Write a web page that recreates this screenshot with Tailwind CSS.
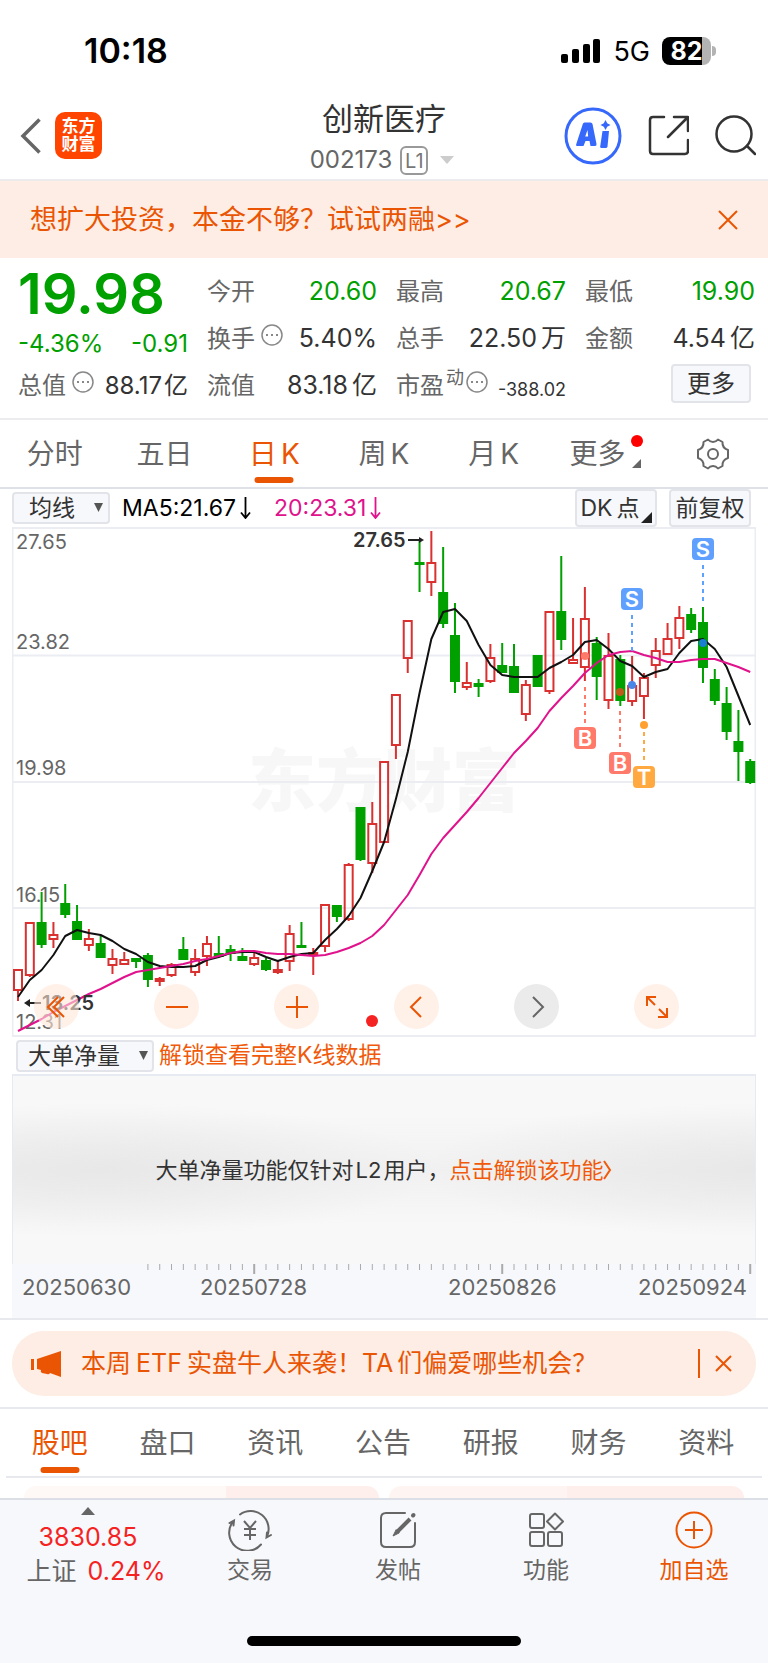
<!DOCTYPE html>
<html lang="zh-CN">
<head>
  <meta charset="UTF-8" />
  <meta name="viewport" content="width=device-width, initial-scale=1.0" />
  <title>创新医疗 002173</title>
  <script src="https://cdn.jsdelivr.net/npm/@tailwindcss/browser@4"></script>
</head>
<body class="min-h-screen flex flex-col bg-white font-['Inter','Noto_Sans_CJK_SC',sans-serif] text-[#333] text-[24px] leading-none">

  <!-- status bar -->
  <div class="h-[95px] pt-[7px] pl-[84px] pr-[52px] flex items-center justify-between text-black">
    <span class="text-[34px] font-semibold">10:18</span>
    <div class="flex items-center gap-3">
      <svg class="w-[40px] h-[24px]" viewBox="0 0 40 24">
        <rect x="0" y="15" width="7" height="9" rx="2" />
        <rect x="11" y="10" width="7" height="14" rx="2" />
        <rect x="22" y="5" width="7" height="19" rx="2" />
        <rect x="32" y="0" width="7" height="24" rx="2" />
      </svg>
      <span class="text-[27px]">5G</span>
      <div class="flex items-center gap-px">
        <div class="w-[49px] h-[28px] rounded-lg bg-linear-to-r from-black from-82% to-[#b3b3b3] to-82% text-white text-[25px] font-bold text-center leading-[28px]">82</div>
        <div class="w-1 h-[10px] rounded-r-full bg-[#b3b3b3]"></div>
      </div>
    </div>
  </div>

  <!-- header -->
  <header class="h-[86px] px-3 grid grid-cols-[1fr_auto_1fr] items-center border-b-2 border-[#ececee]">
    <div class="flex items-center gap-[14px] pl-2 pb-[3px]">
      <button aria-label="返回">
        <svg class="w-[21px] h-[36px]" viewBox="0 0 21 36" fill="none" stroke="#666" stroke-width="3.5"><path d="M19.500 1.500L3 18l16.500 16.500" /></svg>
      </button>
      <a href="#" class="size-[47px] rounded-[10px] bg-[#ff4400] text-white text-[17px] leading-[18px] font-bold text-center pt-[5px]">东方<br />财富</a>
    </div>
    <div class="flex flex-col items-center gap-2">
      <h1 class="text-[31px] leading-[38px]">创新医疗</h1>
      <div class="flex items-center gap-2 pr-1 text-[24px] text-[#666]">
        <span>002173</span>
        <span class="w-[28px] h-[29px] border-2 border-[#999] rounded-md text-[20px] leading-[26px] text-center text-[#777]">L1</span>
        <svg class="w-[14px] h-[8px] ml-1" viewBox="0 0 14 8"><path d="M0 0h14L7 8z" fill="#ccc" /></svg>
      </div>
    </div>
    <div class="flex items-center justify-end gap-[26px] pb-[3px]">
      <button aria-label="AI">
        <svg class="size-[58px]" viewBox="0 0 58 58" fill="#3568fb">
          <circle cx="29" cy="29" r="27" fill="none" stroke="#3568fb" stroke-width="3" />
          <path d="M20.500 15.500h6q1.500 0 2 1.500l4 20q.300 2-1.500 2h-4.500l-1-5h-4l-2 5h-6q-2 0-1.200-2l6.500-20q.400-1.500 1.700-1.500zM23.500 23l-2.300 6.500h3z" />
          <path d="M38.500 24h6.500l-1.500 15.500q-.200 1.500-2 1.500h-4q-1.500 0-1.300-1.500z" />
          <path d="M41.500 13l1.700 3.300 3.300 1.700-3.300 1.700-1.700 3.300-1.700-3.300-3.300-1.700 3.300-1.700z" />
        </svg>
      </button>
      <button aria-label="分享">
        <svg class="w-[41px] h-[41px]" viewBox="0 0 41 41" fill="none" stroke="#333" stroke-width="2.500" stroke-linecap="round" stroke-linejoin="round">
          <path d="M16 2H5Q2 2 2 5v31q0 3 3 3h32q3 0 3-3V25M26 2h14v14M39 3L20 22" />
        </svg>
      </button>
      <button aria-label="搜索">
        <svg class="w-[41px] h-[42px]" viewBox="0 0 41 42" fill="none" stroke="#333" stroke-width="2.500" stroke-linecap="round">
          <circle cx="19" cy="19" r="17.500" /><path d="M32 31l8 8" />
        </svg>
      </button>
    </div>
  </header>

  <div class="h-[77px] px-[30px] flex items-center justify-between bg-[#fdede4] text-[#ea5504]">
    <a href="#" class="text-[27px]">想扩大投资，本金不够？试试两融&gt;&gt;</a>
    <button aria-label="关闭">
      <svg class="size-5" viewBox="0 0 20 20" stroke="currentColor" stroke-width="2"><path d="M1 1l18 18M19 1L1 19" /></svg>
    </button>
  </div>

  <!-- quote -->
  <section class="h-[162px] pr-[13px] pl-[18px] pt-[10px] border-b-2 border-[#ececee] grid grid-cols-[170px_1fr_1fr_1fr] gap-x-[19px] items-start">
    <div>
      <div class="h-[56px] text-[56px] leading-[52px] font-semibold text-[#00a000]">19.98</div>
      <div class="h-[38px] pt-[2px] flex items-center justify-between text-[#00a000] text-[24px]"><span>-4.36%</span><span>-0.91</span></div>
      <div class="h-[47px] flex items-center justify-between">
        <span class="flex items-center gap-[6px] text-[#666]">总值
          <svg class="size-[22px] mb-2" viewBox="0 0 22 22"><circle cx="11" cy="11" r="10" fill="none" stroke="#888" stroke-width="1.500" /><path d="M5 10h2v2H5zM10 10h2v2h-2zM15 10h2v2h-2z" fill="#888" /></svg>
        </span>
        <span>88.17<span class="ml-[2px]">亿</span></span>
      </div>
    </div>
    <dl>
      <div class="h-[47px] flex items-center justify-between"><dt class="text-[#666]">今开</dt><dd class="text-[25px] text-[#00a000]">20.60</dd></div>
      <div class="h-[47px] flex items-center justify-between">
        <dt class="flex items-center gap-[6px] text-[#666]">换手
          <svg class="size-[22px] mb-2" viewBox="0 0 22 22"><circle cx="11" cy="11" r="10" fill="none" stroke="#888" stroke-width="1.500" /><path d="M5 10h2v2H5zM10 10h2v2h-2zM15 10h2v2h-2z" fill="#888" /></svg>
        </dt>
        <dd class="text-[25px]">5.40%</dd>
      </div>
      <div class="h-[47px] flex items-center justify-between"><dt class="text-[#666]">流值</dt><dd class="text-[25px]">83.18<span class="ml-1">亿</span></dd></div>
    </dl>
    <dl>
      <div class="h-[47px] flex items-center justify-between"><dt class="text-[#666]">最高</dt><dd class="text-[25px] text-[#00a000]">20.67</dd></div>
      <div class="h-[47px] flex items-center justify-between"><dt class="text-[#666]">总手</dt><dd class="text-[25px]">22.50<span class="ml-1">万</span></dd></div>
      <div class="h-[47px] flex items-center justify-between">
        <dt class="flex items-center gap-[2px] text-[#666]">市盈<span class="text-[18px] mb-4">动</span>
          <svg class="size-[22px] mb-2" viewBox="0 0 22 22"><circle cx="11" cy="11" r="10" fill="none" stroke="#888" stroke-width="1.500" /><path d="M5 10h2v2H5zM10 10h2v2h-2zM15 10h2v2h-2z" fill="#888" /></svg>
        </dt>
        <dd class="text-[18px] pt-2">-388.02</dd>
      </div>
    </dl>
    <div>
      <dl>
        <div class="h-[47px] flex items-center justify-between"><dt class="text-[#666]">最低</dt><dd class="text-[25px] text-[#00a000]">19.90</dd></div>
        <div class="h-[47px] flex items-center justify-between"><dt class="text-[#666]">金额</dt><dd class="text-[25px]">4.54<span class="ml-1">亿</span></dd></div>
      </dl>
      <button class="block ml-auto mr-1 mt-[2px] w-[80px] h-[39px] rounded border-2 border-[#e2e4ea] bg-[#f7f8fb]">更多</button>
    </div>
  </section>

  <!-- period tabs -->
  <nav class="h-[69px] grid grid-cols-7 items-center justify-items-center border-b-2 border-[#dfe1e8] text-[28px] text-[#666]">
    <a href="#">分时</a>
    <a href="#">五日</a>
    <a href="#" class="relative text-[#ea5504]">日<span class="ml-1">K</span><span class="absolute left-1/2 -translate-x-1/2 top-[37px] w-[39px] h-[6px] rounded-full bg-[#ea5504]"></span></a>
    <a href="#">周<span class="ml-1">K</span></a>
    <a href="#">月<span class="ml-1">K</span></a>
    <a href="#" class="relative pr-3">更多
      <span class="absolute -right-[6px] -top-[5px] size-3 rounded-full bg-[#ff0000]"></span>
      <svg class="absolute -right-1 bottom-0 size-[9px]" viewBox="0 0 9 9"><path d="M9 0v9H0z" fill="#666" /></svg>
    </a>
    <button aria-label="设置">
      <svg class="size-[34px]" viewBox="0 0 34 34" fill="none" stroke="#666" stroke-width="2" stroke-linejoin="round">
        <path d="M12 2.500q2 2.500 5 2.500t5-2.500l4.500 2.500q-.500 6 5.500 8v8q-6 2-5.500 8L22 31.500q-2-2.500-5-2.500t-5 2.500L7.500 29Q8 23 2 21v-8Q8 11 7.500 5z" />
        <circle cx="17" cy="17" r="5" />
      </svg>
    </button>
  </nav>

  <!-- indicator row -->
  <div class="h-[38px] pl-3 pr-[17px] flex items-center text-[23px]">
    <div class="relative mr-3">
      <select aria-label="指标" class="block appearance-none w-[98px] h-[32px] pl-[15px] rounded border-2 border-[#e2e4ea] bg-[#f7f8fb] leading-[28px]"><option>均线</option></select>
      <svg class="absolute right-[7px] top-[11px] w-[9px] h-[9px] pointer-events-none" viewBox="0 0 9 9"><path d="M0 0h9L4.500 9z" fill="#555" /></svg>
    </div>
    <span class="flex items-center gap-1 text-black mr-[23px]">MA5:21.67<svg class="w-[11px] h-[22px]" viewBox="0 0 11 22" fill="none" stroke="currentColor" stroke-width="1.800"><path d="M5.500 0v20.500M1 15.500l4.500 5.500L10 15.500" /></svg></span>
    <span class="flex items-center gap-1 text-[#e0128c]">20:23.31<svg class="w-[11px] h-[22px]" viewBox="0 0 11 22" fill="none" stroke="currentColor" stroke-width="1.800"><path d="M5.500 0v20.500M1 15.500l4.500 5.500L10 15.500" /></svg></span>
    <button class="relative ml-auto mr-3 w-[82px] h-[38px] pr-3 rounded border-2 border-[#e2e4ea] bg-[#f7f8fb] whitespace-nowrap">DK<span class="ml-1">点</span>
      <svg class="absolute right-[3px] bottom-[2px] size-[11px]" viewBox="0 0 11 11"><path d="M11 0v11H0z" fill="#222" /></svg>
    </button>
    <button class="w-[82px] h-[38px] rounded border-2 border-[#e2e4ea] bg-[#f7f8fb] whitespace-nowrap">前复权</button>
  </div>

  <!-- candlestick chart -->
  <div class="relative mx-3">
    <svg id="chart" class="block w-full" viewBox="12 527 744 510" font-family="Inter, sans-serif">
      <text x="384" y="806" text-anchor="middle" font-size="68" font-weight="900" fill="#f7f7f7" style="font-family: 'Noto Sans CJK SC', sans-serif">东方财富</text>
      <g stroke="#ebedf3" stroke-width="2" fill="none">
        <path d="M12 655.500H756M12 782H756M12 908H756" />
        <rect x="12.500" y="528" width="743" height="508" />
      </g>
      <g font-size="20" fill="#666">
        <text x="16" y="549">27.65</text>
        <text x="16" y="649">23.82</text>
        <text x="16" y="775">19.98</text>
        <text x="16" y="902">16.15</text>
        <text x="16" y="1029">12.31</text>
      </g>
      <g id="candles"></g>
      <g id="averages" fill="none" stroke-width="2" stroke-linejoin="round"></g>
      <g font-size="20" font-weight="600" fill="#333">
        <text x="353" y="547">27.65</text>
        <text x="42" y="1010">13.25</text>
      </g>
      <g stroke="#222" stroke-width="2" fill="#222">
        <path d="M408 540h11" /><path d="M419 537l5 3-5 3z" stroke="none" />
        <path d="M29 1003h12" /><path d="M30 999l-6 4 6 4z" stroke="none" />
      </g>
      <g id="signals" font-size="22" font-weight="600" text-anchor="middle"></g>
      <circle cx="372" cy="1021" r="6" fill="#f52222" />
    </svg>
    <div class="absolute left-[22px] right-[77px] bottom-[8px] flex justify-between">
      <button aria-label="最早" class="size-[45px] rounded-full bg-[#ffe6d9]/60 text-[#ea5504]">
        <svg class="block mx-auto size-6" viewBox="0 0 24 24" fill="none" stroke="currentColor" stroke-width="2"><path d="M13 2L3 12l10 10M19 2L9 12l10 10" /></svg>
      </button>
      <button aria-label="缩小" class="size-[45px] rounded-full bg-[#ffe6d9]/60 text-[#ea5504]">
        <svg class="block mx-auto size-6" viewBox="0 0 24 24" fill="none" stroke="currentColor" stroke-width="2"><path d="M1 12h22" /></svg>
      </button>
      <button aria-label="放大" class="size-[45px] rounded-full bg-[#ffe6d9]/60 text-[#ea5504]">
        <svg class="block mx-auto size-6" viewBox="0 0 24 24" fill="none" stroke="currentColor" stroke-width="2"><path d="M1 12h22M12 1v22" /></svg>
      </button>
      <button aria-label="向左" class="size-[45px] rounded-full bg-[#ffe6d9]/60 text-[#ea5504]">
        <svg class="block mx-auto size-6" viewBox="0 0 24 24" fill="none" stroke="currentColor" stroke-width="2"><path d="M16 2L6 12l10 10" /></svg>
      </button>
      <button aria-label="向右" class="size-[45px] rounded-full bg-[#ebebeb] text-[#666]">
        <svg class="block mx-auto size-6" viewBox="0 0 24 24" fill="none" stroke="currentColor" stroke-width="2"><path d="M8 2l10 10L8 22" /></svg>
      </button>
      <button aria-label="全屏" class="size-[45px] rounded-full bg-[#ffe6d9]/60 text-[#ea5504]">
        <svg class="block mx-auto size-6" viewBox="0 0 24 24" fill="none" stroke="currentColor" stroke-width="2"><path d="M2 11V2h9M2 2l8 8M22 13v9h-9M22 22l-8-8" /></svg>
      </button>
    </div>
  </div>

  <div class="h-[37px] pl-4 flex items-center gap-[5px] text-[23px]">
    <div class="relative">
      <select aria-label="副图指标" class="block appearance-none w-[138px] h-[32px] pl-[10px] rounded border-2 border-[#e2e4ea] bg-[#f7f8fb] leading-[28px]"><option>大单净量</option></select>
      <svg class="absolute right-[6px] top-[11px] w-[9px] h-[9px] pointer-events-none" viewBox="0 0 9 9"><path d="M0 0h9L4.500 9z" fill="#555" /></svg>
    </div>
    <a href="#" class="text-[#f05a0a]">解锁查看完整K线数据</a>
  </div>

  <!-- locked indicator -->
  <div class="mx-3 h-[190px] border-t-2 border-x border-[#e8eaf1] flex items-center justify-center text-[22px] bg-[radial-gradient(ellipse_45%_36%_at_12%_50%,#e8e8e8,transparent),radial-gradient(ellipse_45%_36%_at_100%_50%,#e8e8e8,transparent),linear-gradient(#f8f8f8_20%,#f1f1f1_50%,#f8f8f8_80%)]">
    <span>大单净量功能仅针对<span class="mx-[2px]">L2</span>用户，</span>
    <a href="#" class="flex items-center text-[#f05a0a]">点击解锁该功能<svg class="w-[9px] h-[20px]" viewBox="0 0 9 20" fill="none" stroke="currentColor" stroke-width="2"><path d="M1 1l6 9-6 9" /></svg></a>
  </div>
  <div class="mx-3 h-[54px] bg-[#f7f8fb] text-[22px] text-[#666]">
    <svg id="ticks" class="block w-full" viewBox="12 1264 744 11" stroke="#aaa"></svg>
    <div class="grid grid-cols-[1fr_2fr_2fr_1fr] pt-px">
      <span class="pl-[10px]">20250630</span>
      <span class="pl-[64px]">20250728</span>
      <span class="pl-[64px]">20250826</span>
      <span class="flex justify-end pr-[9px]">20250924</span>
    </div>
  </div>

  <div class="h-[91px] px-3 flex items-center border-y-2 border-[#e8e9ee]">
    <div class="flex-1 h-[65px] pl-[19px] pr-[24px] rounded-[32px] bg-[#fdede4] text-[#ea5504] text-[25px] flex items-center">
      <svg class="w-[31px] h-[26px] mr-[19px]" viewBox="0 0 31 26" fill="currentColor"><path d="M0 8h3v11H0zM6 8L30 0v26l-11-4q-1 2-3 1l-5-1q-2-1-1-3l-4-1z" /></svg>
      <a href="#">本周<span class="mx-[5px]">ETF</span>实盘牛人来袭！<span class="mr-1">TA</span>们偏爱哪些机会？</a>
      <span class="ml-auto mr-[15px] w-[2px] h-[29px] bg-[#ea5504]"></span>
      <button aria-label="关闭"><svg class="size-[17px]" viewBox="0 0 17 17" stroke="currentColor" stroke-width="2"><path d="M1 1l15 15M16 1L1 16" /></svg></button>
    </div>
  </div>

  <nav class="mx-[6px] h-[69px] pr-[2px] grid grid-cols-7 items-center text-center text-[28px] text-[#666] border-b-2 border-[#e8e9ee]">
    <a href="#" class="relative text-[#ea5504]">股吧<span class="absolute left-1/2 -translate-x-1/2 top-[38px] w-[39px] h-[6px] rounded-full bg-[#ea5504]"></span></a>
    <a href="#">盘口</a>
    <a href="#">资讯</a>
    <a href="#">公告</a>
    <a href="#">研报</a>
    <a href="#">财务</a>
    <a href="#">资料</a>
  </nav>

  <div class="h-[20px] pt-2 px-6 grid grid-cols-2 gap-[10px]">
    <div class="rounded-t-2xl bg-linear-to-r from-[#fef8f6] from-57% to-[#feefec] to-57%"></div>
    <div class="rounded-t-2xl bg-linear-to-r from-[#fef5f2] from-50% to-[#feefec] to-50%"></div>
  </div>

  <!-- bottom bar -->
  <footer class="flex-1 flex flex-col justify-between border-t-2 border-[#dcdfe6] bg-[#f7f8fb] text-[#666]">
    <div class="pt-[7px] grid grid-cols-[176px_repeat(4,1fr)] text-[23px] text-center">
      <a href="#" class="flex flex-col items-center text-[25px]">
        <svg class="w-[14px] h-[8px]" viewBox="0 0 14 8"><path d="M0 8L7 0l7 8z" fill="#666" /></svg>
        <span class="pt-[10px] text-[#f52222]">3830.85</span>
        <span class="pt-[9px] pl-4 flex items-center gap-[11px]">上证<span class="text-[#f52222]">0.24%</span></span>
      </a>
      <a href="#" class="flex flex-col items-center gap-2 pt-[2px]">
        <svg class="w-[44px] h-[42px]" viewBox="0 0 44 42" fill="none" stroke="currentColor" stroke-width="2" stroke-linecap="round">
          <path d="M12 5.500A18 18 0 0 1 39 27.500M43 26l-4.500 2.500.500-5M33 35.500A18 18 0 0 1 5.500 12M1.500 14l4.500-2.500-.500 5" />
          <path d="M16 12l6 7 6-7M16 20h12M16 26h12M22 19v12" stroke-linecap="butt" />
        </svg>交易</a>
      <a href="#" class="flex flex-col items-center gap-2 pt-[2px]">
        <svg class="w-[44px] h-[42px]" viewBox="0 0 44 42" fill="none" stroke="currentColor" stroke-width="2" stroke-linecap="round">
          <path d="M29 4H10q-5 0-5 5v24q0 5 5 5h24q5 0 5-5V14" />
          <path d="M34 10L21 23" stroke-width="4" stroke-linecap="butt" /><path d="M20 21L17 27l6-3z" fill="currentColor" stroke-width="1" /><path d="M37 6.500l.500-.500" stroke-width="4" />
        </svg>发帖</a>
      <a href="#" class="flex flex-col items-center gap-2 pt-[2px]">
        <svg class="w-[44px] h-[42px]" viewBox="0 0 44 42" fill="none" stroke="currentColor" stroke-width="2" stroke-linejoin="round">
          <rect x="6" y="5" width="14" height="14" rx="2" /><rect x="6" y="23" width="14" height="14" rx="2" /><rect x="24" y="23" width="14" height="14" rx="2" />
          <path d="M31 4.500l8 8-8 8-8-8z" />
        </svg>功能</a>
      <a href="#" class="flex flex-col items-center gap-2 pt-[2px] text-[#ea5504]">
        <svg class="w-[44px] h-[42px]" viewBox="0 0 44 42" fill="none" stroke="currentColor" stroke-width="2"><circle cx="22" cy="21" r="17.500" /><path d="M13 21h18M22 12v18" /></svg>加自选</a>
    </div>
    <div class="mx-auto mb-[17px] w-[274px] h-[10px] rounded-full bg-black"></div>
  </footer>

  <script>
    // [up/down, high, body top, body bottom, low]; 'f' is a filled red bar
    const candles = [
      ['r',969,969,990,1001],['r',922,922,975,977],['g',892,922,944,948],['r',922,934,939,948],['g',884,903,914,918],
      ['g',905,921,939,939],['r',929,938,945,951],['g',935,943,957,957],['r',949,958,965,974],['r',952,959,964,965],
      ['g',958,958,961,968],['g',953,955,979,987],['f',977,978,981,986],['r',963,964,975,977],['g',937,949,959,959],
      ['r',949,958,972,976],['r',936,943,956,966],['g',936,953,956,956],['g',945,949,953,961],['g',948,956,960,961],
      ['r',953,957,964,966],['g',958,960,969,971],['f',960,969,972,974],['r',925,933,961,971],['g',922,945,947,947],
      ['f',948,952,954,975],['r',904,904,946,952],['g',905,905,916,922],['r',863,864,919,921],['g',807,807,859,861],
      ['r',802,823,863,873],['r',761,761,842,842],['r',694,694,745,759],['r',620,620,658,673],['g',540,562,564,592],
      ['r',531,562,582,596],['g',547,592,623,628],['g',603,635,681,693],['r',662,682,687,690],['g',679,683,686,697],
      ['r',644,657,681,683],['g',643,665,672,672],['g',644,666,692,692],['r',680,684,714,721],['g',655,655,686,687],
      ['r',611,611,691,694],['g',556,611,639,650],['r',618,659,663,663],['r',587,618,667,681],['g',637,643,676,700],
      ['r',633,655,700,709],['g',655,659,700,706],['r',656,685,701,706],['r',673,677,696,719],['r',638,650,665,678],
      ['r',623,638,654,654],['r',606,617,638,649],['g',608,614,629,633],['g',607,622,667,683],['g',669,679,700,705],
      ['g',687,703,731,740],['g',710,741,751,781],['g',759,761,782,784]
    ];
    const ma5 = [997,980,970,955,936,930,933,935,941,949,954,962,966,967,967,966,960,957,953,952,952,957,961,957,954,953,940,929,916,898,871,842,
      799,752,693,639,612,609,621,645,665,675,677,677,677,668,662,655,642,640,649,661,666,677,672,669,653,641,639,649,667,696,725];
    const ma20 = [1031,1025,1019,1012,1006,1000,994,989,983,977,972,970,968,966,964,961,959,956,953,951,951,953,954,954,955,956,955,952,948,943,936,925,
      910,895,875,854,838,825,812,798,783,768,753,741,728,711,698,686,673,663,655,652,651,655,658,662,662,660,659,659,663,667,672];
    const x = i => 18 + i * 11.81;

    document.getElementById('candles').innerHTML = candles.map(([t, h, top, bottom, l], i) => {
      const color = t === 'g' ? '#00a000' : '#d93030';
      const fill = t === 'r' ? 'none' : color;
      return `<g stroke="${color}" stroke-width="2"><path d="M${x(i)} ${h}V${top}M${x(i)} ${bottom}V${l}"/>` +
        `<rect x="${x(i) - 4}" y="${top + 1}" width="8" height="${Math.max(bottom - top - 1, 1)}" fill="${fill}"/></g>`;
    }).join('');

    const line = (data, color) => `<polyline stroke="${color}" points="${data.map((y, i) => x(i) + ',' + y).join(' ')}"/>`;
    document.getElementById('averages').innerHTML = line(ma5, '#111') + line(ma20, '#e0128c');

    // [letter, x, badge y, dash start, dash end, dot y, badge color, dot color]
    const signals = [
      ['S',703,549,565,602,643,'#5fa0ff','#1a7fd0'],
      ['S',632,599,615,651,685,'#5fa0ff','#4a86e8'],
      ['B',585,738,687,724,656,'#ff7a6a','#ff7a6a'],
      ['B',620,763,711,748,692,'#ff7a6a','#c05a1c'],
      ['T',644,777,732,762,725,'#ffa940','#ffa030']
    ];
    document.getElementById('signals').innerHTML = signals.map(([s, cx, cy, a, b, dot, color, dotColor]) =>
      `<path d="M${cx} ${a}V${b}" stroke="${color}" stroke-width="2" stroke-dasharray="4 4"/>` +
      `<circle cx="${cx}" cy="${dot}" r="4" fill="${dotColor}"/>` +
      `<rect x="${cx - 11}" y="${cy - 11}" width="22" height="22" rx="4" fill="${color}"/>` +
      `<text x="${cx}" y="${cy + 8}" fill="#fff">${s}</text>`).join('');

    let ticks = '';
    for (let i = 11; i <= 62; i++) {
      const major = (62 - i) % 21 === 0;
      ticks += `<path d="M${x(i)} 1264v${major ? 10 : 6}" stroke-width="${major ? 2 : 1}"/>`;
    }
    document.getElementById('ticks').innerHTML = ticks;
  </script>
</body>
</html>
